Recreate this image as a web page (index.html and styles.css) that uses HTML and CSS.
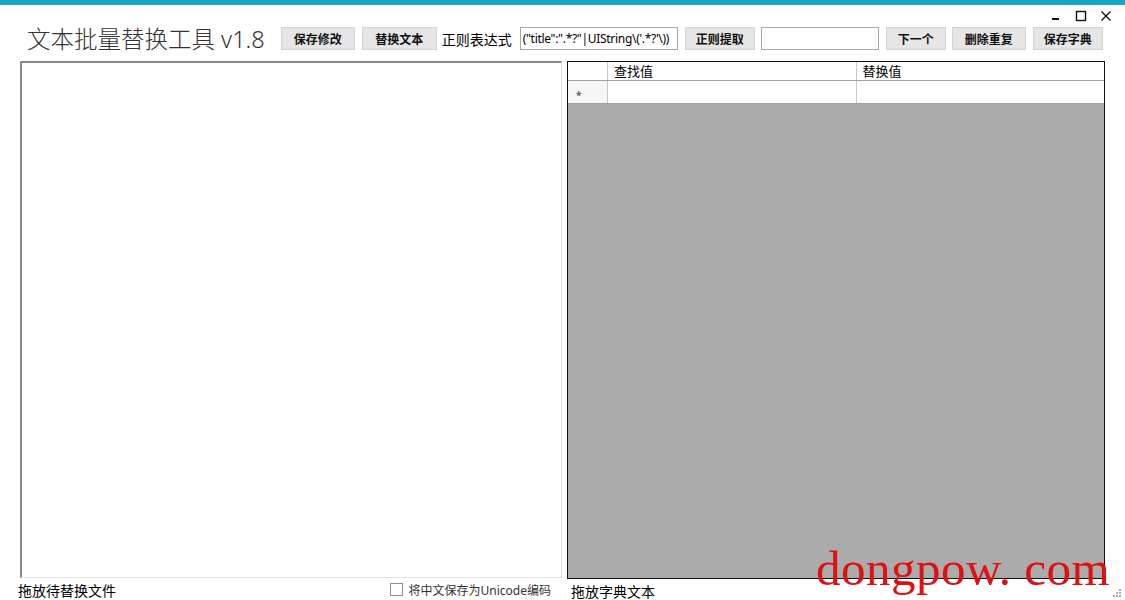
FILE: index.html
```html
<!DOCTYPE html>
<html>
<head>
  <meta charset="utf-8">
  <title>文本批量替换工具 v1.8</title>
  <link rel="stylesheet" href="styles.css">
</head>
<body>
  <div class="stripe"></div>
  <div class="winbar">
    <svg class="wctl" width="14" height="14" viewBox="0 0 14 14"><rect x="3" y="9" width="7" height="2" fill="#111"/></svg>
    <svg class="wctl" width="14" height="14" viewBox="0 0 14 14"><rect x="2.5" y="2.5" width="9" height="9" fill="none" stroke="#111" stroke-width="1.4"/></svg>
    <svg class="wctl" width="14" height="14" viewBox="0 0 14 14"><path d="M2.5 2.5 L11.5 11.5 M11.5 2.5 L2.5 11.5" stroke="#111" stroke-width="1.4"/></svg>
  </div>

  <div class="toolbar">
    <span class="apptitle">文本批量替换工具 v1.8</span>
    <button class="btn">保存修改</button>
    <button class="btn wide tight">替换文本</button>
    <span class="lbl">正则表达式</span>
    <input class="field regex" value="(&quot;title&quot;:&quot;.*?&quot;|UIString\('.*?'\))">
    <button class="btn narrow tight">正则提取</button>
    <input class="field find" value="">
    <button class="btn short tight">下一个</button>
    <button class="btn">删除重复</button>
    <button class="btn narrow">保存字典</button>
  </div>

  <div class="main">
    <div class="col left">
      <div class="textbox"></div>
      <div class="foot">
        <span class="droplbl">拖放待替换文件</span>
        <label class="chk"><span class="box"></span>将中文保存为Unicode编码</label>
      </div>
    </div>
    <div class="col right">
      <div class="grid">
        <div class="row head">
          <div class="rh"></div>
          <div class="cell">查找值</div>
          <div class="cell">替换值</div>
        </div>
        <div class="row newrow">
          <div class="rh"><span class="star">*</span></div>
          <div class="cell"></div>
          <div class="cell"></div>
        </div>
      </div>
      <div class="foot">
        <span class="droplbl dict">拖放字典文本</span>
      </div>
    </div>
  </div>

  <div class="watermark">dongpow. com</div>
  <svg class="grip" width="10" height="10" viewBox="0 0 10 10">
    <rect x="7" y="1" width="2" height="2" fill="#aaa"/>
    <rect x="4" y="4" width="2" height="2" fill="#aaa"/>
    <rect x="7" y="4" width="2" height="2" fill="#aaa"/>
    <rect x="1" y="7" width="2" height="2" fill="#aaa"/>
    <rect x="4" y="7" width="2" height="2" fill="#aaa"/>
    <rect x="7" y="7" width="2" height="2" fill="#aaa"/>
  </svg>
</body>
</html>
```

FILE: styles.css
```css
html, body {
  margin: 0;
  padding: 0;
}
body {
  width: 1125px;
  height: 600px;
  overflow: hidden;
  background: #ffffff;
  color: #000;
  font-family: "Noto Sans", "Noto Sans CJK SC", sans-serif;
  position: relative;
}
.stripe {
  height: 5px;
  background: #17a8c9;
}
.winbar {
  height: 20px;
  display: flex;
  justify-content: flex-end;
  align-items: center;
  gap: 11px;
  padding-right: 12px;
  padding-top: 1px;
  box-sizing: border-box;
}
.wctl {
  display: block;
}
.toolbar {
  display: flex;
  align-items: center;
  height: 23px;
  margin-top: 2px;
  padding-left: 27px;
}
.apptitle {
  font-family: "Noto Sans", "Noto Sans CJK SC", sans-serif;
  font-weight: 300;
  font-size: 23.5px;
  color: #333;
  line-height: 28px;
  margin-right: 16px;
  white-space: nowrap;
}
.btn {
  width: 74px;
  height: 23px;
  padding: 0;
  margin-right: 7px;
  background: #e6e6e6;
  border: 1px solid #d4d4d4;
  font-family: "Noto Sans CJK SC", sans-serif;
  font-weight: 700;
  font-size: 12px;
  color: #111;
  line-height: 20px;
}
.btn.wide {
  width: 75px;
}
.btn.narrow {
  width: 70px;
}
.btn.short {
  width: 60px;
}
.btn.tight {
  margin-right: 6px;
}
.btn:last-child {
  margin-right: 0;
}
.lbl {
  font-family: "Noto Sans CJK SC", sans-serif;
  font-size: 14px;
  margin: 0 8px 0 -1px;
  white-space: nowrap;
}
.field {
  height: 23px;
  box-sizing: border-box;
  border: 1px solid #a8a8a8;
  padding: 0 2px;
  margin-right: 7px;
  font-family: "Noto Sans", "Noto Sans CJK SC", sans-serif;
  font-size: 12px;
  color: #000;
  background: #fff;
}
.regex {
  width: 158px;
  letter-spacing: -0.3px;
}
.find {
  width: 118px;
}
.main {
  display: flex;
  gap: 5px;
  padding-left: 20px;
  margin-top: 11px;
}
.col {
  display: flex;
  flex-direction: column;
}
.left {
  width: 542px;
}
.right {
  width: 538px;
}
.textbox {
  height: 517px;
  box-sizing: border-box;
  border-top: 2px solid #8a8a8a;
  border-left: 2px solid #8a8a8a;
  border-right: 1px solid #e2e2e2;
  border-bottom: 1px solid #e2e2e2;
  background: #fff;
}
.grid {
  height: 518px;
  box-sizing: border-box;
  border: 1px solid #111;
  background: #ababab;
}
.row {
  display: flex;
  background: #fff;
}
.head {
  height: 18px;
  border-bottom: 1px solid #a0a0a0;
}
.newrow {
  height: 22px;
  border-bottom: 1px solid #a0a0a0;
}
.rh {
  width: 40px;
  flex: none;
  border-right: 1px solid #c8c8c8;
  background: #f6f6f6;
  display: flex;
  align-items: center;
  padding-left: 8px;
  box-sizing: border-box;
}
.head .rh {
  background: #fff;
}
.cell {
  flex: 1;
  border-right: 1px solid #c8c8c8;
  font-family: "Noto Sans CJK SC", sans-serif;
  font-size: 13px;
  line-height: 17px;
  padding-left: 6px;
}
.cell:last-child {
  border-right: none;
}
.star {
  font-size: 10px;
  font-weight: 700;
  color: #666;
  line-height: 10px;
  padding-top: 5px;
}
.foot {
  height: 22px;
  display: flex;
  align-items: center;
  justify-content: space-between;
}
.droplbl {
  font-family: "Noto Sans CJK SC", sans-serif;
  font-size: 14px;
  margin-left: -2px;
  padding-top: 1px;
}
.dict {
  margin-left: 4px;
}
.chk {
  display: flex;
  align-items: center;
  gap: 6px;
  font-family: "Noto Sans", "Noto Sans CJK SC", sans-serif;
  font-size: 12px;
  color: #333;
  margin-right: 11px;
  padding-top: 1px;
}
.box {
  width: 11px;
  height: 11px;
  border: 1px solid #8f8f8f;
  background: #fff;
}
.watermark {
  position: absolute;
  left: 816px;
  top: 540px;
  font-family: "Liberation Serif", serif;
  font-size: 49px;
  color: #dd1111;
  white-space: nowrap;
  letter-spacing: 0.5px;
}
.grip {
  position: absolute;
  right: 3px;
  bottom: 2px;
}
```
